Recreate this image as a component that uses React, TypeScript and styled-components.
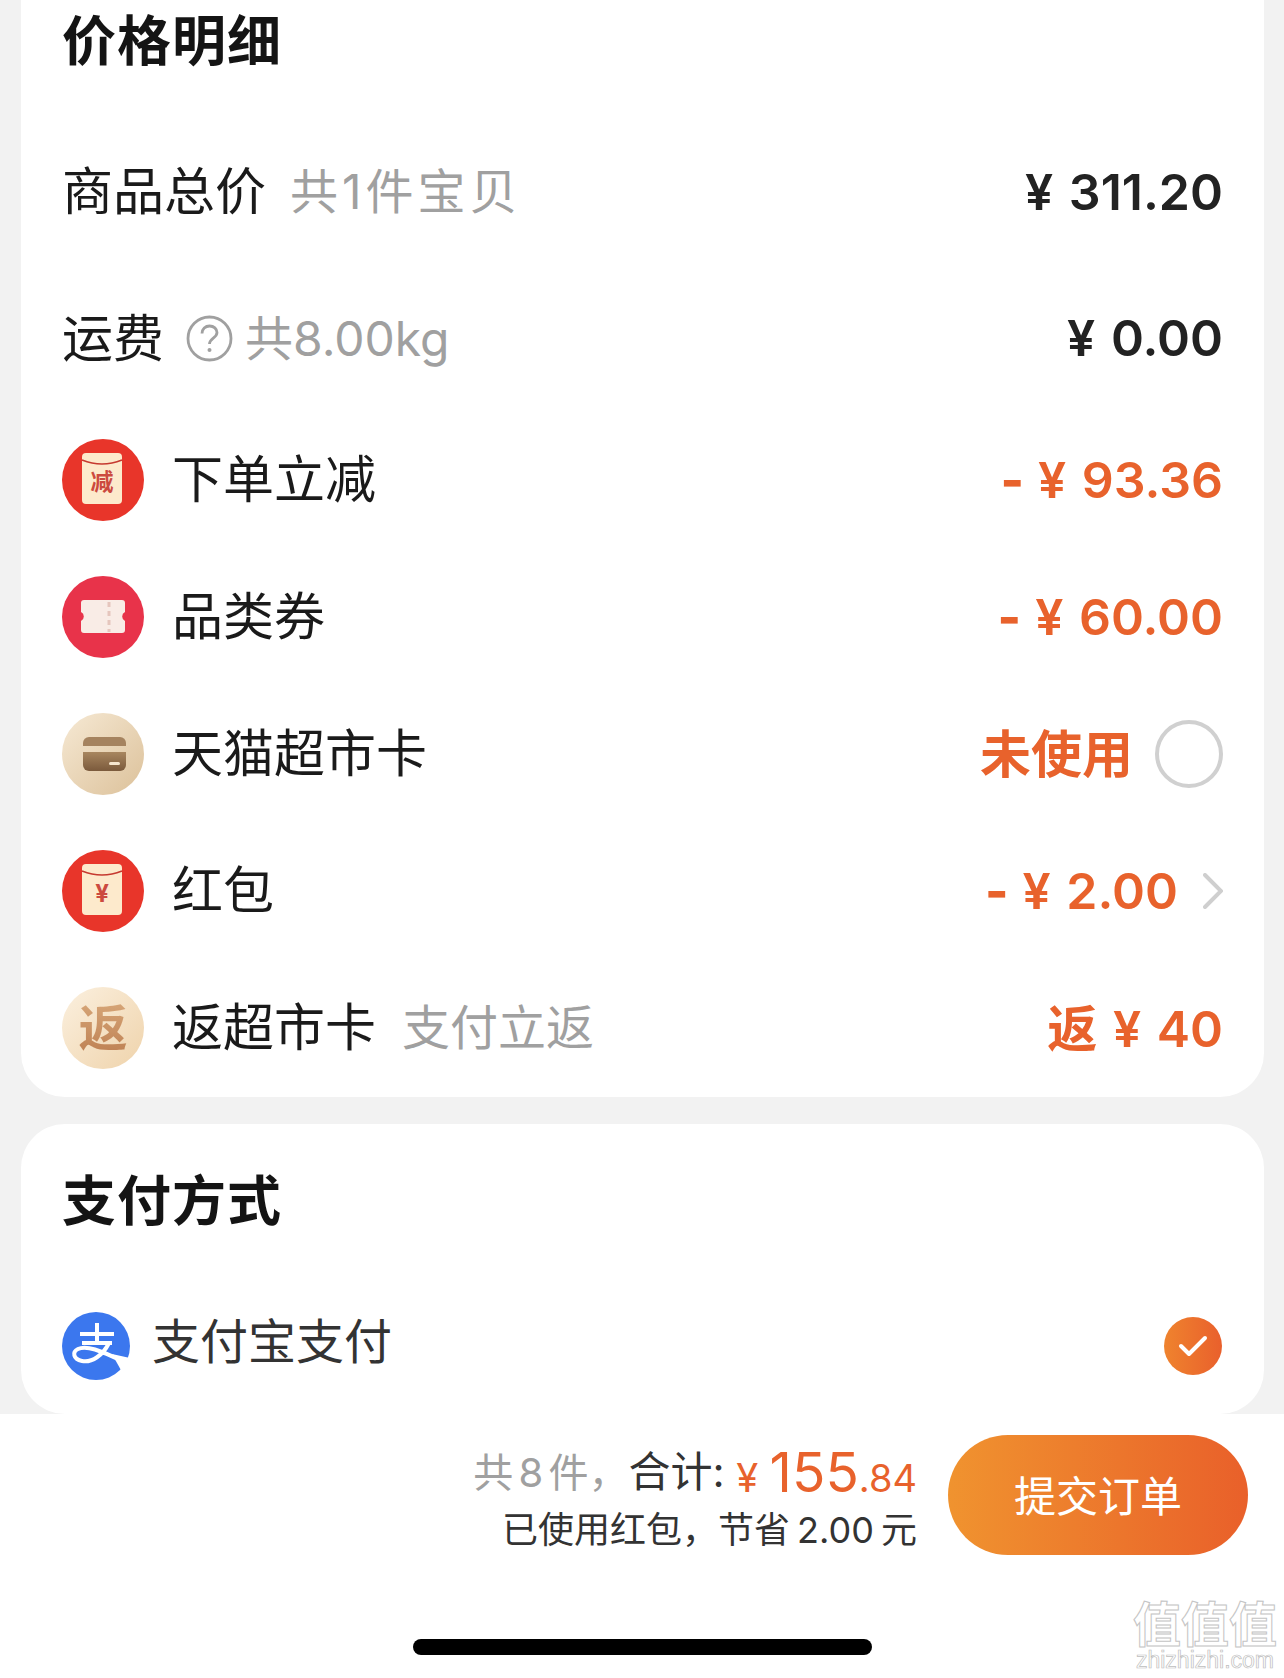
import React, { ReactNode } from "react";
import styled, { createGlobalStyle } from "styled-components";

const ORANGE = "#e8622c";

const GlobalStyle = createGlobalStyle`
  html, body {
    margin: 0;
    padding: 0;
    background: #f2f2f2;
  }
  * {
    box-sizing: border-box;
  }
`;

const Page = styled.div`
  width: 1284px;
  height: 1678px;
  overflow: hidden;
  position: relative;
  display: flex;
  flex-direction: column;
  background: #f2f2f2;
  font-family: Inter, "Noto Sans CJK SC", sans-serif;
  color: #111;
`;

const PriceCard = styled.section`
  margin: 0 20px 27px 21px;
  padding: 0 41px;
  height: 1097px;
  background: #fff;
  border-radius: 0 0 44px 44px;
`;

const PayCard = styled.section`
  margin: 0 20px 0 21px;
  padding: 0 41px;
  height: 290px;
  background: #fff;
  border-radius: 44px;
`;

const Title = styled.h2`
  margin: 0 0 41px;
  height: 77px;
  display: flex;
  align-items: flex-end;
  font-size: 54px;
  font-weight: 700;
  letter-spacing: 1px;
  color: #141414;
`;

const PayTitle = styled.h2`
  margin: 0;
  padding: 0 0 6px;
  height: 152px;
  display: flex;
  align-items: center;
  font-size: 54px;
  font-weight: 700;
  letter-spacing: 1px;
  color: #141414;
`;

const Row = styled.div<{ $height: number }>`
  height: ${(p) => p.$height}px;
  display: flex;
  align-items: center;
  justify-content: space-between;
`;

const Left = styled.div`
  display: flex;
  align-items: center;
`;

const Right = styled.div`
  display: flex;
  align-items: center;
`;

const Label = styled.span<{ $indent?: number }>`
  font-size: 51px;
  color: #1a1a1a;
  margin-left: ${(p) => p.$indent ?? 0}px;
  padding-bottom: 7px;
`;

const Sub = styled.span<{ $indent: number; $spacing?: number }>`
  font-size: 48px;
  color: #a0a0a0;
  margin-left: ${(p) => p.$indent}px;
  padding-bottom: 7px;
  letter-spacing: ${(p) => p.$spacing ?? 0}px;
`;

const Amount = styled.span<{ $accent?: boolean; $lift?: number }>`
  font-size: 50px;
  font-weight: 600;
  word-spacing: 3px;
  padding-bottom: ${(p) => p.$lift ?? 0}px;
  color: ${(p) => (p.$accent ? ORANGE : "#222")};
`;

const Dash = styled.span`
  font-weight: 800;
  margin-right: 14px;
`;

const Status = styled.span`
  font-size: 51px;
  font-weight: 700;
  color: ${ORANGE};
  margin-right: 22px;
  padding-bottom: 6px;
`;

const Radio = styled.span`
  width: 68px;
  height: 68px;
  border-radius: 50%;
  border: 4px solid #d0d0d0;
`;

const Round = styled.span<{ $bg: string }>`
  width: 82px;
  height: 82px;
  flex: none;
  border-radius: 50%;
  background: ${(p) => p.$bg};
  display: flex;
  align-items: center;
  justify-content: center;
`;

const ReturnGlyph = styled.span`
  font-size: 49px;
  font-weight: 700;
  padding-bottom: 6px;
  background: linear-gradient(180deg, #dcae80, #b9794b);
  -webkit-background-clip: text;
  background-clip: text;
  color: transparent;
`;

const PayLeft = styled.div`
  display: flex;
  align-items: center;
  padding-top: 2px;
`;

const PayLabel = styled.span`
  font-size: 48px;
  color: #333;
  margin: 0 0 16px 22px;
`;

const Check = styled.span`
  width: 58px;
  height: 58px;
  margin: 2px 1px 0 0;
  border-radius: 50%;
  display: flex;
  align-items: center;
  justify-content: center;
  background: linear-gradient(90deg, #ef832e, #e9602c);
`;

const Footer = styled.footer`
  height: 264px;
  background: #fff;
  display: flex;
  flex-direction: column;
  align-items: center;
`;

const FooterRow = styled.div`
  width: 100%;
  display: flex;
  justify-content: flex-end;
  padding: 21px 36px 0 0;
  gap: 31px;
`;

const Summary = styled.div`
  padding-top: 8px;
`;

const SummaryLine = styled.div`
  height: 58px;
  text-align: right;
  white-space: pre;
  line-height: 58px;
`;

const Muted = styled.span`
  font-size: 40px;
  color: #a0a0a0;
  word-spacing: -6px;
  vertical-align: 5px;
`;

const Dark = styled.span`
  font-size: 42px;
  color: #333;
  vertical-align: 5px;
`;

const Saved = styled.span`
  font-size: 36px;
  color: #333;
  word-spacing: -3px;
`;

const Price = styled.span<{ $size: number }>`
  font-size: ${(p) => p.$size}px;
  color: ${ORANGE};
`;

const SubmitButton = styled.button`
  width: 300px;
  height: 120px;
  padding: 0 0 4px;
  border: 0;
  border-radius: 60px;
  background: linear-gradient(90deg, #f0932f, #e9602a);
  color: #fff;
  font-family: inherit;
  font-size: 42px;
`;

const HomeBar = styled.div`
  width: 459px;
  height: 16px;
  margin-top: 80px;
  border-radius: 8px;
  background: #000;
`;

const Watermark = styled.div`
  position: absolute;
  right: 7px;
  bottom: 6px;
  width: 144px;
  display: flex;
  flex-direction: column;
  align-items: center;
  color: #fff;
`;

const MarkGlyphs = styled.span`
  font-size: 48px;
  line-height: 46px;
  font-weight: 700;
  -webkit-text-stroke: 1px #c4c4c4;
`;

const MarkDomain = styled.span`
  font-size: 23px;
  line-height: 24px;
  font-family: "Liberation Sans", sans-serif;
  -webkit-text-stroke: 0.7px #bdbdbd;
`;

const Envelope = ({ children }: { children: ReactNode }) => (
  <svg width="82" height="82" viewBox="0 0 82 82">
    <rect x="20" y="14" width="40" height="51" rx="4" fill="#fdeacc" />
    <path d="M20 21q20 8 40 0" fill="none" stroke="#c63a30" strokeWidth="1.6" />
    {children}
  </svg>
);

const EnvelopeText = styled.text<{ $size: number }>`
  font-size: ${(p) => p.$size}px;
  font-weight: 700;
  fill: #cc4a3f;
  text-anchor: middle;
`;

const TicketIcon = () => (
  <svg width="82" height="82" viewBox="0 0 82 82">
    <path
      d="M22 24h38a3 3 0 0 1 3 3v9a5 5 0 0 0 0 9v9a3 3 0 0 1-3 3H22a3 3 0 0 1-3-3v-9a5 5 0 0 0 0-9v-9a3 3 0 0 1 3-3z"
      fill="#f9ece6"
    />
    <path d="M47 26v30" stroke="#e6c6bd" strokeWidth="3" strokeDasharray="5 4" />
  </svg>
);

const CardIcon = () => (
  <svg width="82" height="82" viewBox="0 0 82 82">
    <defs>
      <linearGradient id="wallet" x1="0" y1="0" x2="0" y2="1">
        <stop offset="0" stopColor="#a8865f" />
        <stop offset="1" stopColor="#7b5a3c" />
      </linearGradient>
    </defs>
    <path d="M21 33v-3a6 6 0 0 1 6-6h31a6 6 0 0 1 6 6v3z" fill="#a5835f" />
    <path d="M21 39h43v13a6 6 0 0 1-6 6H27a6 6 0 0 1-6-6z" fill="url(#wallet)" />
    <rect x="47" y="49" width="11" height="3" rx="1.5" fill="#f6e6cf" />
  </svg>
);

const AlipayIcon = () => (
  <svg width="68" height="68" viewBox="0 0 68 68">
    <circle cx="34" cy="34" r="34" fill="#3b77ee" />
    <path d="M18 22h34M35 11v20M20 31h30" stroke="#fff" strokeWidth="4" fill="none" />
    <path
      d="M47 31C41 43 30 51 20 49C11 47 10 40 16 37C24 33 38 38 62 50"
      stroke="#fff"
      strokeWidth="4"
      fill="none"
    />
    <path d="M50 42L68 46L66 54L60 60z" fill="#fff" />
  </svg>
);

const HelpIcon = () => (
  <svg width="47" height="47" viewBox="0 0 47 47" style={{ marginLeft: 22, flex: "none" }}>
    <circle cx="23.5" cy="23.5" r="21.5" fill="none" stroke="#a0a0a0" strokeWidth="2.8" />
    <path
      d="M16 18.5c0-4.5 3.4-7.5 7.6-7.5s7.4 2.8 7.4 6.6c0 5.6-7.5 5.6-7.5 11.4"
      fill="none"
      stroke="#a0a0a0"
      strokeWidth="2.8"
    />
    <circle cx="23.5" cy="35" r="2" fill="#a0a0a0" />
  </svg>
);

const Chevron = () => (
  <svg width="20" height="36" viewBox="0 0 20 36" style={{ marginLeft: 25 }}>
    <path d="M2 2l16 16L2 34" fill="none" stroke="#cfcfcf" strokeWidth="4" strokeLinecap="round" />
  </svg>
);

const CheckMark = () => (
  <svg width="32" height="26" viewBox="0 0 32 26">
    <path d="M4 13l8 8L28 5" fill="none" stroke="#fff" strokeWidth="4" strokeLinecap="round" strokeLinejoin="round" />
  </svg>
);

const App = () => {
  return (
    <Page>
      <GlobalStyle />
      <PriceCard>
        <Title>价格明细</Title>
        <Row $height={147}>
          <Left>
            <Label>商品总价</Label>
            <Sub $indent={24} $spacing={4}>共1件宝贝</Sub>
          </Left>
          <Amount>¥ 311.20</Amount>
        </Row>
        <Row $height={146}>
          <Left>
            <Label>运费</Label>
            <HelpIcon />
            <Sub $indent={12}>共8.00kg</Sub>
          </Left>
          <Amount>¥ 0.00</Amount>
        </Row>
        <Row $height={137}>
          <Left>
            <Round $bg="#e8352a">
              <Envelope>
                <EnvelopeText $size={23} x="40" y="51">
                  减
                </EnvelopeText>
              </Envelope>
            </Round>
            <Label $indent={28}>下单立减</Label>
          </Left>
          <Amount $accent>
            <Dash>-</Dash>¥ 93.36
          </Amount>
        </Row>
        <Row $height={137}>
          <Left>
            <Round $bg="#e8334a">
              <TicketIcon />
            </Round>
            <Label $indent={28}>品类券</Label>
          </Left>
          <Amount $accent>
            <Dash>-</Dash>¥ 60.00
          </Amount>
        </Row>
        <Row $height={137}>
          <Left>
            <Round $bg="linear-gradient(135deg, #f6e9d4, #dcc19a)">
              <CardIcon />
            </Round>
            <Label $indent={28}>天猫超市卡</Label>
          </Left>
          <Right>
            <Status>未使用</Status>
            <Radio />
          </Right>
        </Row>
        <Row $height={137}>
          <Left>
            <Round $bg="#e8352a">
              <Envelope>
                <EnvelopeText $size={24} x="40" y="52">
                  ¥
                </EnvelopeText>
              </Envelope>
            </Round>
            <Label $indent={28}>红包</Label>
          </Left>
          <Right>
            <Amount $accent>
              <Dash>-</Dash>¥ 2.00
            </Amount>
            <Chevron />
          </Right>
        </Row>
        <Row $height={137}>
          <Left>
            <Round $bg="linear-gradient(135deg, #fbf0df, #efd3ab)">
              <ReturnGlyph>返</ReturnGlyph>
            </Round>
            <Label $indent={28}>返超市卡</Label>
            <Sub $indent={26}>支付立返</Sub>
          </Left>
          <Amount $accent $lift={6}>
            返 ¥ 40
          </Amount>
        </Row>
      </PriceCard>
      <PayCard>
        <PayTitle>支付方式</PayTitle>
        <Row $height={138}>
          <PayLeft>
            <AlipayIcon />
            <PayLabel>支付宝支付</PayLabel>
          </PayLeft>
          <Check>
            <CheckMark />
          </Check>
        </Row>
      </PayCard>
      <Footer>
        <FooterRow>
          <Summary>
            <SummaryLine>
              <Muted>共 8 件，</Muted>
              <Dark>合计: </Dark>
              <Price $size={40}>¥ </Price>
              <Price $size={55}>155</Price>
              <Price $size={38}>.84</Price>
            </SummaryLine>
            <SummaryLine>
              <Saved>已使用红包，节省 2.00 元</Saved>
            </SummaryLine>
          </Summary>
          <SubmitButton>提交订单</SubmitButton>
        </FooterRow>
        <HomeBar />
      </Footer>
      <Watermark>
        <MarkGlyphs>值值值</MarkGlyphs>
        <MarkDomain>zhizhizhi.com</MarkDomain>
      </Watermark>
    </Page>
  );
};

export default App;
